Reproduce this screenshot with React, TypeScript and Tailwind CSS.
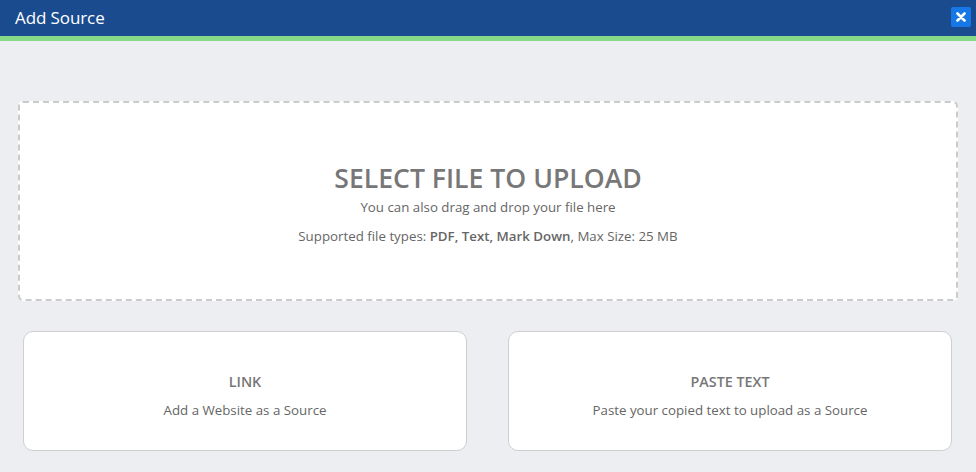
import React from "react";

export default function App() {
  return (
    <div className="w-[976px] h-[472px] bg-[#eceef2] overflow-hidden" style={{ fontFamily: '"Open Sans", "Noto Sans", sans-serif' }}>
      <div className="h-[36px] bg-[#1b4b8f] flex items-center justify-between pl-[15px] pr-[5px]">
        <span className="text-white text-[17px] tracking-[-0.1px]">Add Source</span>
        <button className="w-[20px] h-[20px] bg-[#1677e6] rounded-[2px] flex items-center justify-center mt-[-2px]">
          <svg width="10" height="10" viewBox="0 0 10 10">
            <path d="M1.5 1.5 L8.5 8.5 M8.5 1.5 L1.5 8.5" stroke="white" strokeWidth="2.6" strokeLinecap="round" />
          </svg>
        </button>
      </div>
      <div className="h-[5px] bg-[#86d986]" />
      <div className="px-[18px] pt-[60px]">
        <div className="h-[200px] bg-white border-2 border-dashed border-[#cbcbcb] rounded-[5px] flex flex-col items-center pt-[60px] text-[#666]">
          <div className="text-[26.6px] font-semibold text-[#777] leading-[30px]">SELECT FILE TO UPLOAD</div>
          <div className="text-[13.3px] leading-[18px] mt-[5px]">You can also drag and drop your file here</div>
          <div className="text-[13.3px] leading-[18px] mt-[11px]">
            Supported file types: <span className="font-semibold">PDF, Text, Mark Down</span>, Max Size: 25 MB
          </div>
        </div>
      </div>
      <div className="pl-[23px] pr-[24px] pt-[30px] grid grid-cols-2 gap-[41px]">
        <div className="h-[120px] bg-white border border-[#cfcfcf] rounded-[10px] flex flex-col items-center pt-[40px] text-[#666]">
          <div className="text-[14.3px] font-semibold text-[#777] leading-[20px]">LINK</div>
          <div className="text-[13.3px] leading-[18px] mt-[9px]">Add a Website as a Source</div>
        </div>
        <div className="h-[120px] bg-white border border-[#cfcfcf] rounded-[10px] flex flex-col items-center pt-[40px] text-[#666]">
          <div className="text-[14.3px] font-semibold text-[#777] leading-[20px]">PASTE TEXT</div>
          <div className="text-[13.3px] leading-[18px] mt-[9px]">Paste your copied text to upload as a Source</div>
        </div>
      </div>
    </div>
  );
}
